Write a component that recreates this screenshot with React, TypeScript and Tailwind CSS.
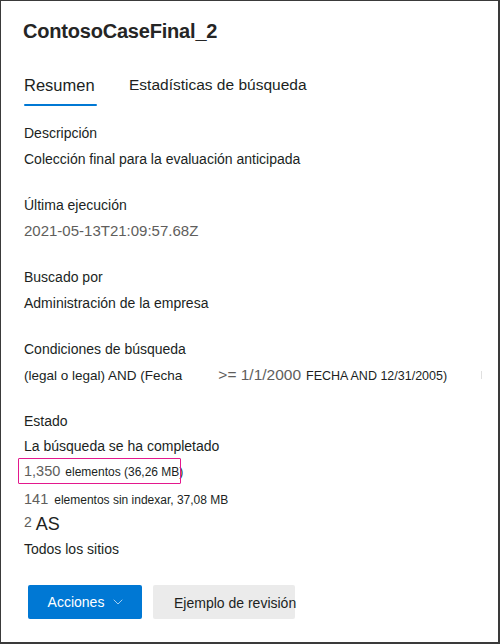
import { ChevronDown } from "lucide-react";

const font = { fontFamily: '"Liberation Sans", Arial, sans-serif' };

const Field = ({ label, children }: { label: string; children: React.ReactNode }) => (
  <div className="flex flex-col">
    <div className="h-[26px] leading-[26px] text-[14px] text-[#201f1e]">{label}</div>
    {children}
  </div>
);

export default function App() {
  return (
    <div
      className="w-[500px] h-[644px] bg-white border-l border-t border-r-2 border-b-2 border-[#3a3a3a] overflow-hidden flex flex-col"
      style={font}
    >
      {/* title */}
      <div className="pl-[22px] pt-[15px] h-[45px] leading-[30px] text-[20px] font-bold text-[#252525] tracking-[-0.2px]">
        ContosoCaseFinal_2
      </div>

      {/* tabs */}
      <div className="mt-[27px] pl-[23px] flex gap-[32px]">
        <div className="flex flex-col">
          <div className="h-[24px] leading-[24px] text-[16.5px] text-[#201f1e]">Resumen</div>
          <div className="mt-[7px] h-[2px] w-[73px] bg-[#0078d4] rounded-full" />
        </div>
        <div className="h-[24px] leading-[24px] text-[15.5px] text-[#201f1e]">
          Estadísticas de búsqueda
        </div>
      </div>

      {/* details */}
      <div className="mt-[14px] pl-[23px] flex flex-col gap-[20px]">
        <Field label="Descripción">
          <div className="h-[26px] leading-[26px] text-[14px] text-[#201f1e]">
            Colección final para la evaluación anticipada
          </div>
        </Field>
        <Field label="Última ejecución">
          <div className="h-[26px] leading-[26px] text-[15px] text-[#605e5c]">
            2021-05-13T21:09:57.68Z
          </div>
        </Field>
        <Field label="Buscado por">
          <div className="h-[26px] leading-[26px] text-[14px] text-[#201f1e]">
            Administración de la empresa
          </div>
        </Field>
        <Field label="Condiciones de búsqueda">
          <div className="h-[26px] leading-[26px] flex items-baseline whitespace-nowrap text-[#201f1e]">
            <span className="text-[13.5px]">(legal o legal) AND (Fecha</span>
            <span className="ml-[36px] text-[15.5px] text-[#605e5c]">&gt;= 1/1/2000</span>
            <span className="ml-[5px] text-[12.5px]">FECHA AND 12/31/2005)</span>
            <span className="ml-[34px] w-[1px] h-[8px] bg-[#e0e0e0] self-center" />
          </div>
        </Field>
        <div className="flex flex-col">
          <div className="h-[26px] leading-[26px] text-[14px] text-[#201f1e]">Estado</div>
          <div className="h-[25px] leading-[25px] text-[14px] text-[#201f1e]">
            La búsqueda se ha completado
          </div>
          <div className="relative h-[24px] leading-[24px] flex items-baseline whitespace-nowrap">
            <span className="text-[14.5px] text-[#605e5c]">1,350</span>
            <span className="ml-[5px] text-[12px] text-[#201f1e]">elementos (36,26 MB)</span>
            <div className="absolute left-[-6px] top-[-1px] w-[163px] h-[26px] border-[1.5px] border-[#e3188d] rounded-[1px]" />
          </div>
          <div className="mt-[3px] h-[26px] leading-[26px] flex items-baseline whitespace-nowrap">
            <span className="text-[14.5px] text-[#605e5c]">141</span>
            <span className="ml-[6px] text-[12px] text-[#201f1e]">elementos sin indexar, 37,08 MB</span>
          </div>
          <div className="h-[24px] leading-[24px] flex items-baseline">
            <span className="text-[14px] text-[#605e5c] relative top-[-3px]">2</span>
            <span className="ml-[4px] text-[18px] text-[#201f1e]">AS</span>
          </div>
          <div className="h-[26px] leading-[26px] text-[14px] text-[#201f1e]">Todos los sitios</div>
        </div>
      </div>

      {/* buttons */}
      <div className="mt-[23px] pl-[27px] flex gap-[11px]">
        <button className="w-[114px] h-[34px] bg-[#0078d4] rounded-[2px] text-white text-[14px] flex items-center justify-center gap-[6px] pl-[4px]">
          <span>Acciones</span>
          <ChevronDown className="w-[16px] h-[16px] text-[#cfe4f7]" strokeWidth={1.2} />
        </button>
        <button className="w-[142px] h-[34px] bg-[#ebebeb] rounded-[2px] text-[#201f1e] text-[14px] whitespace-nowrap text-left pl-[21px] pt-[2px]">
          Ejemplo de revisión
        </button>
      </div>
    </div>
  );
}
